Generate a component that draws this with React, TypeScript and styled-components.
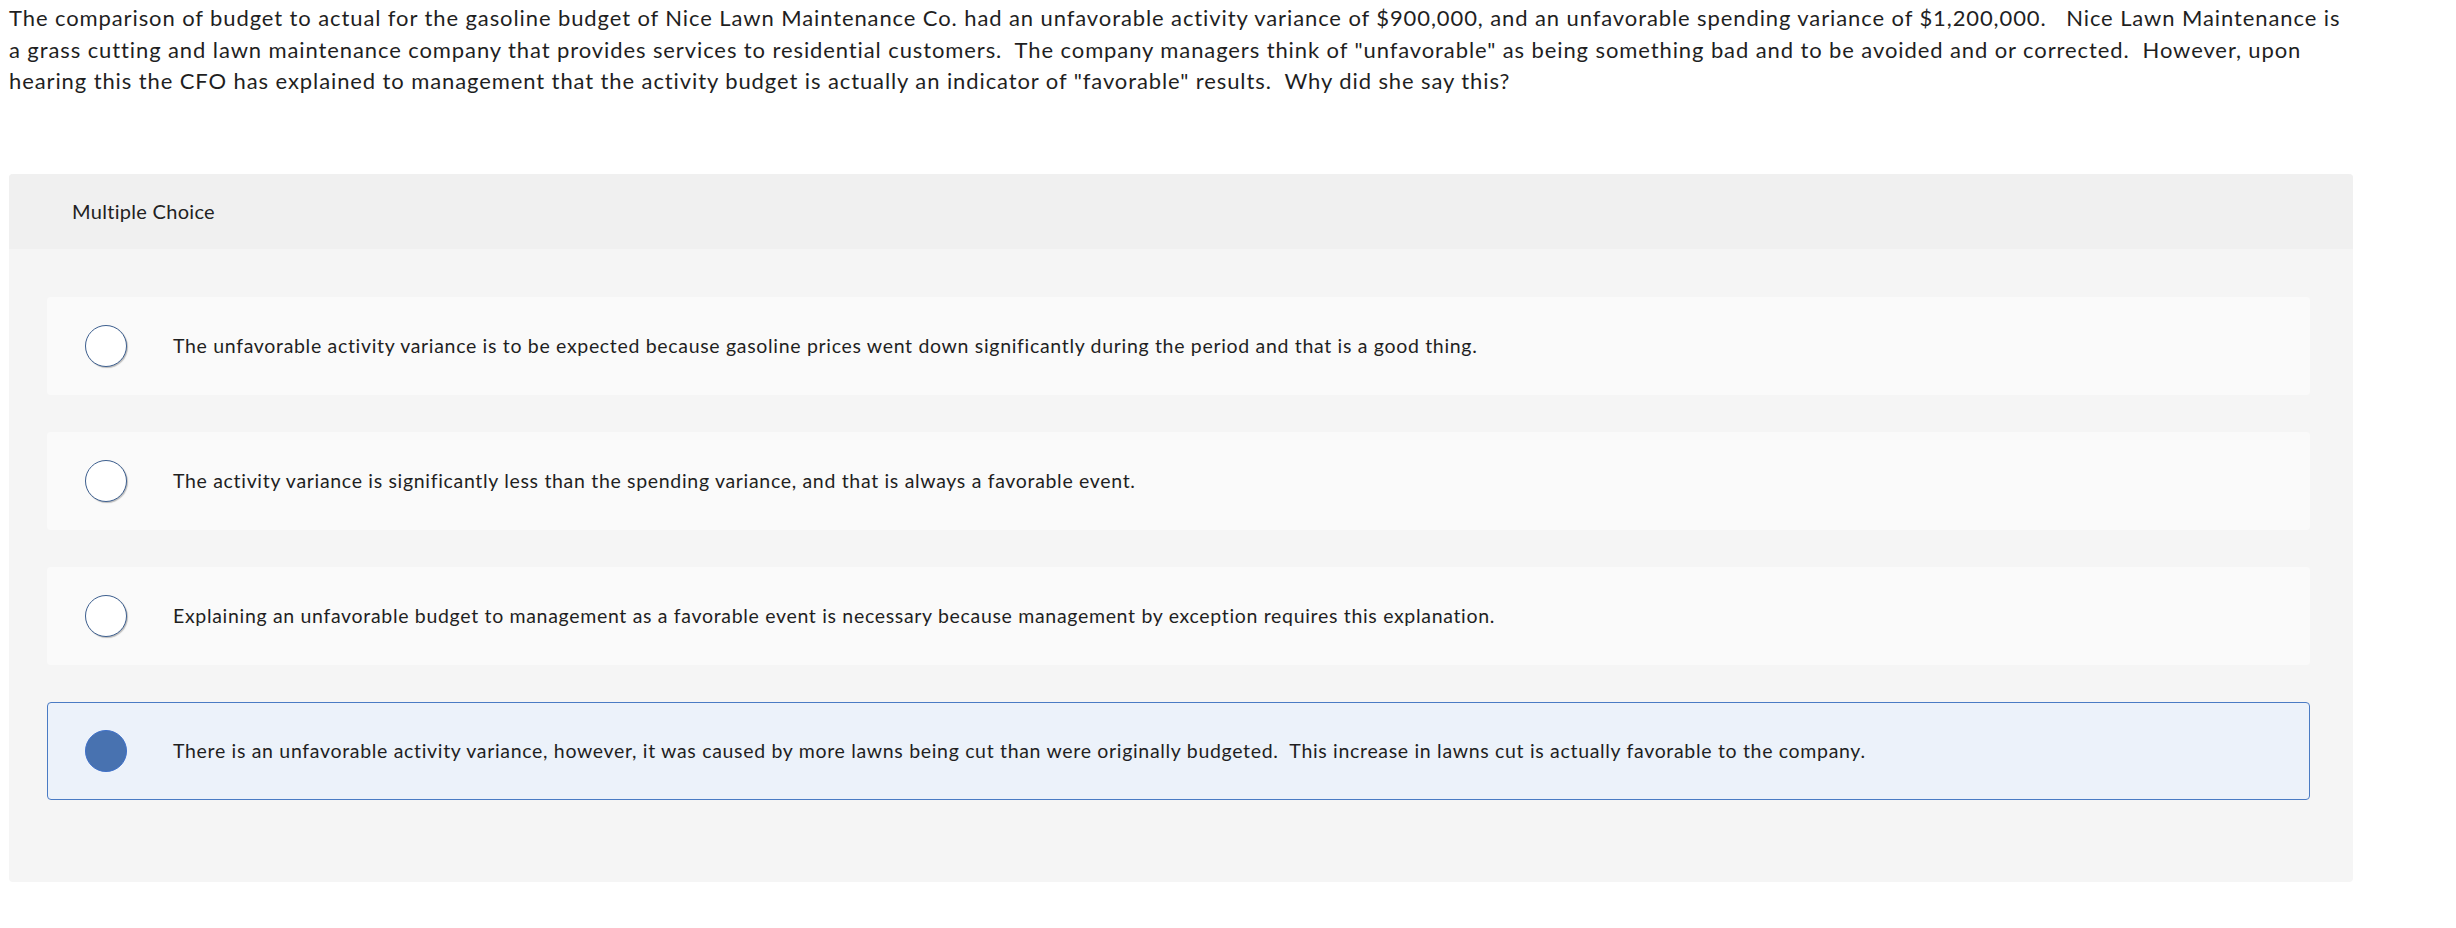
import React from "react";
import styled, { createGlobalStyle } from "styled-components";

const Global = createGlobalStyle`
  html, body { margin: 0; padding: 0; background: #ffffff; }
  body { font-family: Lato, "Open Sans", sans-serif; color: #222222; }
`;

const Page = styled.div`
  padding: 0 103px 0 9px;
`;

const Question = styled.p`
  margin: 0;
  padding-top: 2px;
  font-size: 22px;
  line-height: 31.5px;
  letter-spacing: 0.9px;
  white-space: nowrap;
  color: #1f1f1f;
`;

const Panel = styled.section`
  margin-top: 77px;
  width: 2344px;
  background: #f5f5f5;
  border-radius: 4px;
  overflow: hidden;
`;

const Header = styled.div`
  height: 75px;
  display: flex;
  align-items: center;
  padding-left: 63px;
  background: #f0f0f0;
  font-size: 20px;
  letter-spacing: 0.3px;
  color: #222;
`;

const Options = styled.div`
  display: flex;
  flex-direction: column;
  gap: 37px;
  padding: 48px 43px 82px 38px;
`;

const Option = styled.label<{ $selected?: boolean }>`
  box-sizing: border-box;
  height: 98px;
  display: flex;
  align-items: center;
  gap: 46px;
  padding-left: 37px;
  border-radius: 4px;
  border: 1px solid ${(p) => (p.$selected ? "#4a7bc4" : "transparent")};
  background: ${(p) => (p.$selected ? "#ecf2fa" : "#fafafa")};
  font-size: 19.5px;
  letter-spacing: 0.68px;
  color: #1f1f1f;
`;

const Radio = styled.span<{ $selected?: boolean }>`
  box-sizing: border-box;
  flex: none;
  width: 42px;
  height: 42px;
  border-radius: 50%;
  border: 1.5px solid ${(p) => (p.$selected ? "#3e70c8" : "#3d5f8f")};
  background: ${(p) => (p.$selected ? "#4872b0" : "#ffffff")};
  box-shadow: ${(p) => (p.$selected ? "none" : "1px 1px 1px rgba(0,0,0,0.25)")};
`;

const options = [
  "The unfavorable activity variance is to be expected because gasoline prices went down significantly during the period and that is a good thing.",
  "The activity variance is significantly less than the spending variance, and that is always a favorable event.",
  "Explaining an unfavorable budget to management as a favorable event is necessary because management by exception requires this explanation.",
  "There is an unfavorable activity variance, however, it was caused by more lawns being cut than were originally budgeted.  This increase in lawns cut is actually favorable to the company.",
];

export default function App() {
  return (
    <Page>
      <Global />
      <Question>
        The comparison of budget to actual for the gasoline budget of Nice Lawn Maintenance Co. had an unfavorable activity variance of $900,000, and an unfavorable spending variance of $1,200,000.&nbsp;&nbsp; Nice Lawn Maintenance is
        <br />
        a grass cutting and lawn maintenance company that provides services to residential customers.&nbsp; The company managers think of "unfavorable" as being something bad and to be avoided and or corrected.&nbsp; However, upon
        <br />
        hearing this the CFO has explained to management that the activity budget is actually an indicator of "favorable" results.&nbsp; Why did she say this?
      </Question>
      <Panel>
        <Header>Multiple Choice</Header>
        <Options>
          {options.map((t, i) => (
            <Option key={i} $selected={i === 3}>
              <Radio $selected={i === 3} />
              <span>{t.split("  ").map((s, j, a) => (j < a.length - 1 ? <React.Fragment key={j}>{s}&nbsp; </React.Fragment> : <React.Fragment key={j}>{s}</React.Fragment>))}</span>
            </Option>
          ))}
        </Options>
      </Panel>
    </Page>
  );
}
